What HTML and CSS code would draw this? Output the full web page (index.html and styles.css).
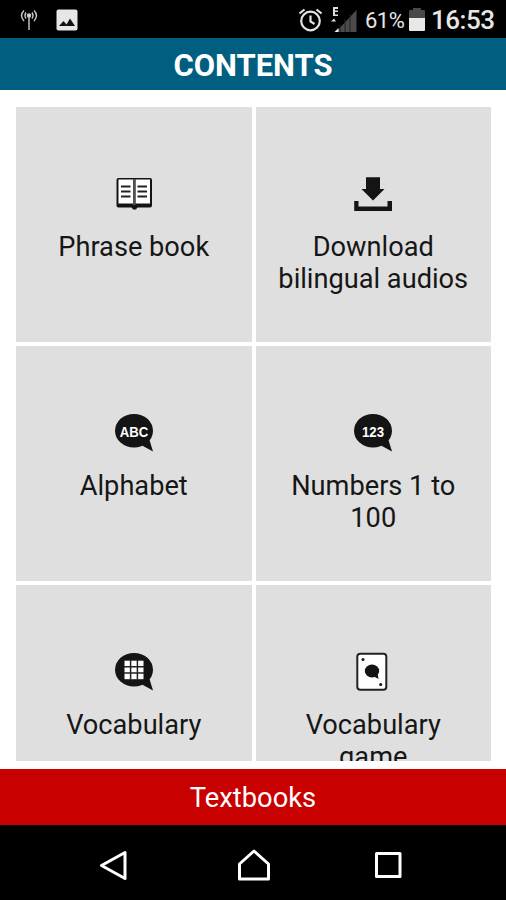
FILE: index.html
```html
<!DOCTYPE html>
<html lang="en">
<head>
<meta charset="utf-8">
<title>Contents</title>
<link rel="stylesheet" href="styles.css">
</head>
<body>
<div class="status">
  <svg class="antenna" width="18" height="22" viewBox="0 0 18 22" fill="none" stroke="#ccc" stroke-width="1.400"><path d="M9 7v14M6 3.500q-2 3 0 6M12 3.500q2 3 0 6"/><path d="M4 1.500q-5 5 0 10.500M14 1.500q5 5 0 10.500"/><circle cx="9" cy="6.500" r="1.500" fill="#ddd"/></svg>
  <svg class="photo" width="22" height="22" viewBox="0 0 22 22"><rect x=".5" y=".5" width="21" height="21" rx="2" fill="#e6e6e6"/><path d="M3 17l4.500-5 3 3.500 3.500-6 5 7.500z" fill="#111"/></svg>
  <div class="spacer"></div>
  <svg class="alarm" width="24" height="24" viewBox="0 0 24 24" fill="none" stroke="#e4e4e4" stroke-width="2.200"><circle cx="12.500" cy="13" r="9.300"/><path d="M12.500 7.500v6l4 2.500M1.500 5.500l5-4M18.500 1.500l5 4"/></svg>
  <svg class="signal" width="26" height="26" viewBox="0 0 26 26"><path d="M2 0h5v2H4v1.500h3v1.500H4v2.500h3v1.500H2zM0 14.500l3-3 2 3z" fill="#ddd"/><path d="M25.500 3v22H5z" fill="#4b4b4b"/><path d="M7.500 21v4H3.500z" fill="#eee"/><path d="M9 18v7M14 12v13M19 7v18" stroke="#222" stroke-width="1"/></svg>
  <span class="percent">61%</span>
  <svg class="battery" width="16" height="24" viewBox="0 0 16 24"><path d="M4 0h8v2h3a1 1 0 0 1 1 1v7H0V3a1 1 0 0 1 1-1h3z" fill="#484848"/><path d="M0 10h16v12a1 1 0 0 1-1 1H1a1 1 0 0 1-1-1z" fill="#e8e8e8"/></svg>
  <span class="clock">16:53</span>
</div>
<header class="title">CONTENTS</header>
<main class="grid">
  <div class="tile">
    <svg class="icon" viewBox="0 0 40 40"><rect x="2.500" y="5" width="35.500" height="29.500" rx="2" fill="#141414"/><path d="M4.500 6.500h14.500V30.500H4.500zM21.500 6.500h14.500V30.500H21.500z" fill="#fff"/><path d="M17 33.500h7l-2 3h-3z" fill="#141414"/><path d="M20.300 6v26" stroke="#555" stroke-width="2.400"/><path d="M7 13.500h9.500M7 18.500h9.500M7 23.500h9.500M23.500 13.500h9.500M23.500 18.500h9.500M23.500 23.500h9.500" stroke="#222" stroke-width="2.200"/></svg>
    <div class="label">Phrase book</div>
  </div>
  <div class="tile">
    <svg class="icon" viewBox="0 0 40 40" fill="#141414"><path d="M13 4.200h14V16h4.500L20 27.500 8.500 16H13zM1.200 28H5.500v5.500h29v-5.500h4.500v10H1.200z"/></svg>
    <div class="label">Download<br>bilingual audios</div>
  </div>
  <div class="tile">
    <svg class="icon" viewBox="0 0 40 40" fill="#141414"><ellipse cx="20" cy="18.700" rx="19" ry="16.800"/><path d="M28 33.500l11 6L35.500 28z"/><text class="word" x="20" y="24.500" textLength="28.500" lengthAdjust="spacingAndGlyphs">ABC</text></svg>
    <div class="label">Alphabet</div>
  </div>
  <div class="tile">
    <svg class="icon" viewBox="0 0 40 40" fill="#141414"><ellipse cx="20" cy="18.700" rx="19" ry="16.800"/><path d="M28 33.500l11 6L35.500 28z"/><text class="word" x="20" y="24.500" textLength="22" lengthAdjust="spacingAndGlyphs">123</text></svg>
    <div class="label">Numbers 1 to<br>100</div>
  </div>
  <div class="tile">
    <svg class="icon" viewBox="0 0 40 40" fill="#141414"><ellipse cx="20" cy="18.700" rx="19" ry="16.800"/><path d="M28 33.500l11 6L35.500 28z"/><path d="M10.500 9.700h19v18.500h-19z" fill="#fff"/><path d="M16.600 9v19.500M23.400 9v19.500M10 15.700h20M10 22h20" stroke="#222" stroke-width="1.500"/></svg>
    <div class="label">Vocabulary</div>
  </div>
  <div class="tile">
    <svg class="icon" viewBox="0 0 40 40" fill="#141414"><rect x="4.300" y="2.700" width="29" height="36" rx="3" fill="#fff" stroke="#222" stroke-width="2"/><ellipse cx="19" cy="20" rx="7.200" ry="6.500"/><path d="M21 25.500l4.500 2.500L24.500 22z"/><circle cx="10" cy="8.500" r="1.500"/><circle cx="27.700" cy="33.500" r="1.500"/></svg>
    <div class="label">Vocabulary<br>game</div>
  </div>
</main>
<footer class="textbooks">Textbooks</footer>
<nav class="nav">
  <svg width="30" height="34" viewBox="0 0 30 34"><path d="M3.500 17.500L27 4.500v26z"/></svg>
  <svg class="home" width="34" height="34" viewBox="0 0 34 34"><path d="M2.500 31V16L17 3 31.500 16v15z"/></svg>
  <svg width="30" height="34" viewBox="0 0 30 34"><path d="M3.500 5.500h23.500v23h-23.500z"/></svg>
</nav>
</body>
</html>
```
FILE: styles.css
```css
* { box-sizing: border-box; }
body {
  margin: 0;
  width: 506px;
  height: 900px;
  overflow: hidden;
  display: flex;
  flex-direction: column;
  background: #fff;
  font-family: Roboto, "Liberation Sans", sans-serif;
}
.status {
  height: 38px;
  flex: none;
  display: flex;
  align-items: center;
  padding: 2px 12px 0 20px;
  background: #000;
  color: #e6e6e6;
}
.photo { margin-left: 18px; }
.spacer { flex: 1; }
.signal { margin-left: 9px; }
.percent { margin-left: 8px; font-size: 22px; width: 39px; white-space: nowrap; letter-spacing: -0.5px; }
.battery { margin-left: 5px; }
.clock { margin-left: 6px; font-size: 26px; font-weight: 500; width: 63px; white-space: nowrap; letter-spacing: -0.5px; }
.title {
  height: 52px;
  flex: none;
  background: #005e80;
  color: #fff;
  font-size: 31px;
  font-weight: 700;
  line-height: 56px;
  text-align: center;
}
.grid {
  height: 654px;
  flex: none;
  margin: 17px 15px 7px 16px;
  display: grid;
  grid-template-columns: 1fr 1fr;
  grid-auto-rows: 235px;
  gap: 4px;
  overflow: hidden;
}
.tile {
  background: #dfdfdf;
  display: flex;
  flex-direction: column;
  align-items: center;
  padding-top: 66px;
}
.icon { width: 40px; height: 40px; flex: none; }
.word {
  font-family: "Liberation Sans", sans-serif;
  font-weight: 700;
  font-size: 15px;
  fill: #fff;
  text-anchor: middle;
}
.label {
  margin-top: 18px;
  font-size: 27.2px;
  line-height: 32px;
  color: #161616;
  text-align: center;
  white-space: nowrap;
}
.textbooks {
  height: 56px;
  flex: none;
  margin-top: 1px;
  background: #c90000;
  color: #fff;
  font-size: 27.3px;
  line-height: 59px;
  text-align: center;
}
.nav {
  flex: 1;
  display: flex;
  align-items: center;
  justify-content: space-between;
  padding: 4px 103px 0 98px;
  background: #000;
}
.home { margin-left: 7px; }
.nav path { fill: none; stroke: #fff; stroke-width: 3; stroke-linejoin: round; }
```
